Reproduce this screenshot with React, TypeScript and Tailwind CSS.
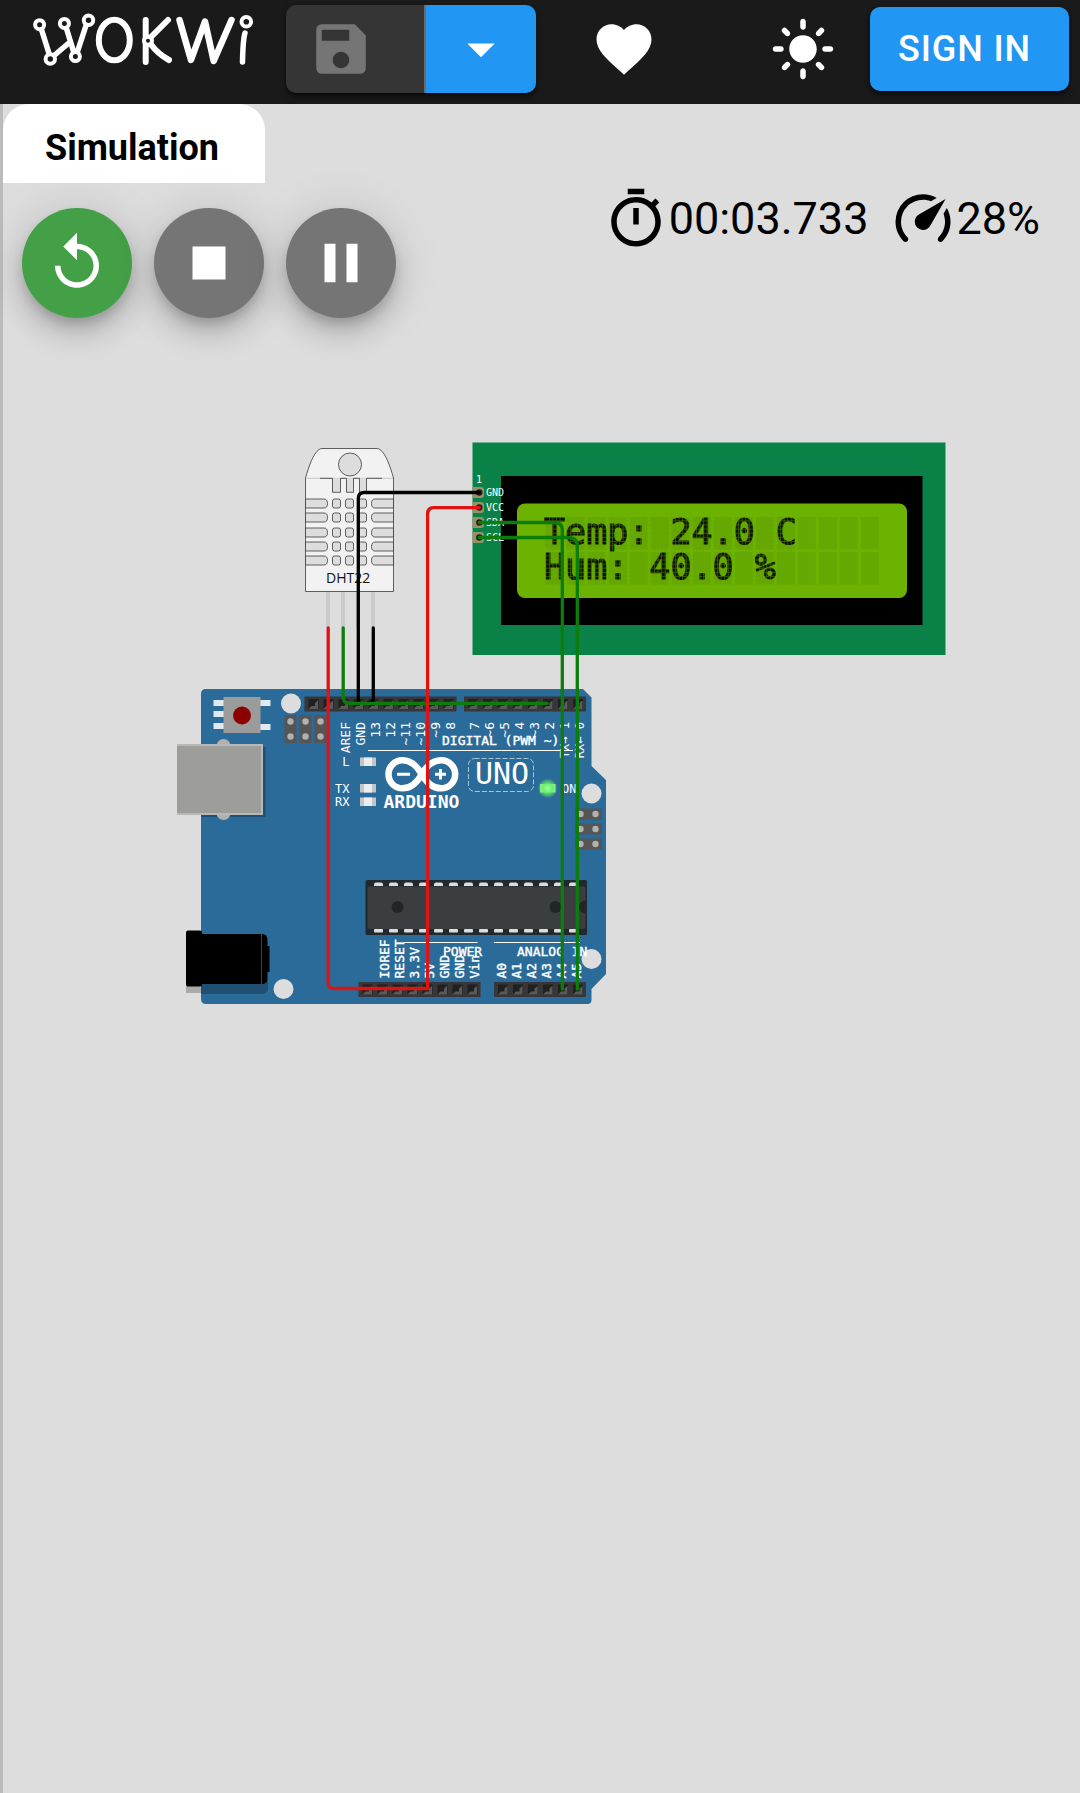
import React from "react";
import {
  MdSave,
  MdArrowDropDown,
  MdFavorite,
  MdLightMode,
  MdOutlineTimer,
  MdReplay,
  MdStop,
  MdPause,
} from "react-icons/md";

const range = (n: number) => Array.from({ length: n }, (_, i) => i);
const MONO = '"DejaVu Sans Mono", monospace';

function Logo() {
  return (
    <svg viewBox="28 10 232 64" className="h-16 w-[232px]" role="img" aria-label="Wokwi" fill="none" stroke="#fff" strokeLinecap="round" strokeLinejoin="round">
      <g strokeWidth="5.5">
        <path d="M41 28L49.500 55M53.500 56L70 42M66 27L74 53M77 53L86.500 24" />
        <ellipse cx="114.300" cy="40" rx="15.500" ry="20.300" strokeWidth="6" />
        <path d="M145.700 20V62M151 37L168 20M151 44.500Q158 54 169 60" strokeWidth="6" />
        <path d="M179.500 20L191 60L205 21.500L213.700 61L231.500 20" strokeWidth="6.500" />
        <path d="M245 33Q243 39 242.500 62" />
      </g>
      <g strokeWidth="4" fill="#1a1a1a">
        <circle cx="39.600" cy="24.700" r="4.500" />
        <circle cx="50.300" cy="59" r="4.700" />
        <circle cx="64.400" cy="23.400" r="4.500" />
        <circle cx="75.400" cy="56.600" r="4.500" />
        <circle cx="88.500" cy="20.300" r="4.700" />
        <circle cx="148" cy="40.700" r="4" />
        <circle cx="246.300" cy="21.700" r="4.800" />
      </g>
    </svg>
  );
}

function GaugeIcon() {
  return (
    <svg viewBox="0 0 24 24" className="size-[66px]" fill="currentColor" aria-hidden="true">
      <path d="M12,16A3,3 0 0,1 9,13C9,11.88 9.61,10.9 10.5,10.39L20.21,4.77L14.68,14.35C14.18,15.33 13.17,16 12,16M12,3C13.81,3 15.5,3.5 16.97,4.32L14.87,5.53C14,5.19 13,5 12,5A8,8 0 0,0 4,13C4,15.21 4.89,17.21 6.34,18.65H6.35C6.74,19.04 6.74,19.67 6.35,20.06C5.96,20.45 5.32,20.45 4.93,20.07V20.07C3.12,18.26 2,15.76 2,13A10,10 0 0,1 12,3M22,13C22,15.76 20.88,18.26 19.07,20.07V20.07C18.68,20.45 18.05,20.45 17.66,20.06C17.27,19.67 17.27,19.04 17.66,18.65V18.65C19.11,17.2 20,15.21 20,13C20,12 19.81,11 19.46,10.1L20.67,8C21.5,9.5 22,11.18 22,13Z" />
    </svg>
  );
}

function Dht22() {
  return (
    <g>
      <g fill="#cacaca">
        {[326, 341, 356, 371].map((x) => (
          <rect key={x} x={x} y="591" width="4" height="37" />
        ))}
      </g>
      <g stroke="#3a3a3a" strokeWidth=".8">
        <path d="M305.500 591.500V478C309 466 313 454 319 449.500Q320 448.500 323 448.500H376Q379 448.500 380 449.500C386 454 390 466 393.500 478V591.500Z" fill="#f2f2f2" />
        <circle cx="350" cy="464.500" r="11.500" fill="#ddd" />
        <path d="M305.500 478.300H393.500" stroke="#999" strokeWidth=".5" />
        <path d="M320 478.300H332.500V492.300H340.500V478.300H346.500V492.300H353.500V478.300H359.500V492.300H366.500V478.300H382" fill="#ddd" />
        {[499, 513, 528, 542, 556].map((y) => (
          <g key={y} fill="#ddd">
            <path d={`M305.500 ${y}H324Q327.500 ${y} 327.500 ${y + 4.500}T324 ${y + 9}H305.500Z`} />
            <path d={`M393.500 ${y}H375Q371.500 ${y} 371.500 ${y + 4.500}T375 ${y + 9}H393.500Z`} />
            {[332.500, 345.500, 358.500].map((x) => (
              <rect key={x} x={x} y={y} width="8" height="9" rx="2" />
            ))}
          </g>
        ))}
      </g>
      <text x="326" y="583" fontSize="14" fontFamily='"Open Sans", sans-serif' fill="#111">DHT22</text>
    </g>
  );
}

function Lcd() {
  return (
    <g>
      <rect x="472.500" y="442.500" width="473" height="212.500" fill="#0a8146" />
      <rect x="501" y="476" width="421.500" height="149" fill="#000" />
      <rect x="517" y="503.500" width="390" height="94.500" rx="8" fill="#6cb201" />
      <g fill="#65a801">
        {[517, 552].map((y) => range(16).map((i) => <rect key={`${y}-${i}`} x={545.700 + i * 21.020} y={y} width="17.800" height="32.500" />))}
      </g>
      <g fontSize="35" fill="#0c1400" stroke="#0c1400" strokeWidth="1">
        <text x="544" y="544">Temp: 24.0 C</text>
        <text x="544" y="579">Hum: 40.0 %</text>
      </g>
      <g fill="#65a801" opacity=".5">
        {range(2).map((row) => range(7).map((i) => <rect key={`${row}-${i}`} x="545" y={520.500 + row * 35 + i * 4.100} width="252" height=".8" />))}
        {range(12).map((c) => range(4).map((i) => <rect key={`${c}-${i}`} x={549 + c * 21.020 + i * 3.560} y="517" width=".8" height="67.500" />))}
      </g>
      {["GND", "VCC", "SDA", "SCL"].map((label, i) => (
        <g key={label}>
          <path d={`M472.500 ${487 + i * 15}H481Q484 ${487 + i * 15} 484 ${490 + i * 15}V${495 + i * 15}Q484 ${498 + i * 15} 481 ${498 + i * 15}H472.500Z`} fill="#959269" />
          <circle cx="479.300" cy={492.500 + i * 15} r="3.200" fill="#2a1a14" />
          <text x="486" y={495.500 + i * 15} fontSize="10" fill="#fff">{label}</text>
        </g>
      ))}
      <text x="476" y="483" fontSize="10" fill="#fff">1</text>
    </g>
  );
}

function Header({ x, y, pins }: { x: number; y: number; pins: number }) {
  return (
    <g>
      <rect x={x} y={y} width={pins * 15 + 2} height="15" fill="#37373a" />
      {range(pins).map((i) => (
        <g key={i}>
          <rect x={x + 4 + i * 15} y={y + 2.500} width="10" height="10" fill="#202020" />
          <path d={`M${x + 13.500 + i * 15} ${y + 4}V${y + 12.500}H${x + 4 + i * 15}L${x + 7 + i * 15} ${y + 9.500}H${x + 10.500 + i * 15}V${y + 6.500}Z`} fill="#5a5a5a" />
        </g>
      ))}
    </g>
  );
}

const topLabels: [number, string][] = [
  [346, "AREF"], [361, "GND"], [376, "13"], [391, "12"], [406, "~11"], [421, "~10"], [436, "~9"], [451, "8"],
  [475, "7"], [490, "~6"], [505, "~5"], [520, "4"], [535, "~3"], [550, "2"], [565, "TX→ 1"], [580, "RX← 0"],
];

const bottomLabels: [number, string][] = [
  [384, "IOREF"], [399, "RESET"], [414, "3.3V"], [429, "5V"], [444, "GND"], [459, "GND"], [474, "Vin"],
  [501, "A0"], [516, "A1"], [531, "A2"], [546, "A3"], [561, "A4"], [576, "A5"],
];

function Arduino() {
  return (
    <g>
      <path d="M206 689H583L591.500 697.500V766L606 780V974L591.500 989V1000Q591.500 1004 587.500 1004H206Q201 1004 201 999V694Q201 689 206 689Z" fill="#2b6b99" />
      <g fill="#ddd">
        <circle cx="291" cy="703.500" r="10" />
        <circle cx="591.500" cy="793.500" r="10" />
        <circle cx="591.500" cy="959" r="10" />
        <circle cx="283.500" cy="989" r="10" />
      </g>

      <g fill="#dfe9ef">
        <rect x="213.500" y="700" width="57" height="6" />
        <rect x="213.500" y="711" width="20" height="6" />
        <rect x="213.500" y="723" width="20" height="6" />
        <rect x="250" y="724" width="20.500" height="6" />
      </g>
      <rect x="223.500" y="697" width="37" height="36" fill="#9b9b9b" />
      <circle cx="242" cy="715.500" r="9" fill="#8c0000" />

      {[290.500, 305.500, 320.500].map((x) => (
        <g key={x}>
          <rect x={x - 6} y="715" width="12" height="28" fill="#555" />
          <circle cx={x} cy="721.500" r="3.200" fill="#b3b1ae" />
          <circle cx={x} cy="736.500" r="3.200" fill="#b3b1ae" />
        </g>
      ))}
      {[814, 829, 844].map((y) => (
        <g key={y}>
          <rect x="575" y={y - 5.500} width="27" height="11" fill="#555" />
          <circle cx="580.500" cy={y} r="3.200" fill="#b3b1ae" />
          <circle cx="595.500" cy={y} r="3.200" fill="#b3b1ae" />
        </g>
      ))}

      <rect x="201" y="747" width="64.500" height="70" fill="#1f5078" />
      <circle cx="223.500" cy="746" r="7" fill="#b1b1ae" />
      <circle cx="223.500" cy="813" r="7" fill="#b1b1ae" />
      <rect x="177" y="744" width="86" height="71" fill="#b7b9b8" />
      <rect x="177" y="746" width="84" height="67" fill="#9d9d99" />

      <rect x="186" y="940" width="15" height="53" fill="#aaa" />
      <path d="M201 980H268V990Q266 994 262 994H201Z" fill="#1f4f73" />
      <rect x="186" y="930.500" width="16" height="56" rx="2" fill="#000" />
      <path d="M201 934H262Q267.500 934 267.500 940V946H269.500V972H267.500V978Q267.500 984 262 984H201Z" fill="#000" />
      <path d="M261.500 934V984" stroke="#444" />

      <Header x={304.500} y={696.500} pins={10} />
      <Header x={464} y={696.500} pins={8} />
      <Header x={358.500} y={982} pins={8} />
      <Header x={494} y={982} pins={6} />

      <g fill="#fff" fontSize="13">
        {topLabels.map(([x, s]) => (
          <text key={s} transform={`translate(${x + 4} 722) rotate(-90)`} textAnchor="end" fontSize={s.length > 4 ? 12 : 13}>{s}</text>
        ))}
        {bottomLabels.map(([x, s]) => (
          <text key={x} transform={`translate(${x + 5} 978.500) rotate(-90)`} stroke="#fff" strokeWidth=".4">{s}</text>
        ))}
        <g stroke="#fff" strokeWidth=".4">
          <text x="442" y="745">DIGITAL (PWM ~)</text>
          <text x="443" y="955.500">POWER</text>
          <text x="517" y="955.500">ANALOG IN</text>
        </g>
        <g fontSize="12">
          <text x="349.500" y="766" textAnchor="end">L</text>
          <text x="349.500" y="793" textAnchor="end">TX</text>
          <text x="349.500" y="806" textAnchor="end">RX</text>
          <text x="562" y="793">ON</text>
        </g>
        <text x="383.500" y="808" fontSize="18" fontWeight="700">ARDUINO</text>
        <text x="475" y="784" fontSize="30">UNO</text>
      </g>
      <path d="M368 750.500H573M404 942.500H477.500M494 942.500H580" stroke="#fff" />
      <rect x="468.500" y="758.500" width="65" height="33" rx="6" fill="none" stroke="#c8dae6" strokeWidth=".8" strokeDasharray="5 2" />
      <path d="M421.800 774.300C417 766 411 760.300 402.500 760.300A14 14 0 0 0 402.500 788.300C411 788.300 417 782.500 421.800 774.300C426.500 766 432.500 760.300 441.200 760.300A14 14 0 0 1 441.200 788.300C432.500 788.300 426.500 782.500 421.800 774.300Z" fill="none" stroke="#fff" strokeWidth="6.500" />
      <path d="M397 774.300H410M435 774.300H446M440.500 769V779.500" stroke="#fff" strokeWidth="3" />

      {[757.500, 784, 797.500].map((y) => (
        <g key={y}>
          <rect x="360" y={y} width="16" height="8.500" fill="#c2c6c8" />
          <rect x="364" y={y} width="8" height="8.500" fill="#ededed" />
        </g>
      ))}
      <rect x="540" y="784" width="15.500" height="8.500" fill="#a5e8a5" />
      <circle cx="547.700" cy="788.300" r="10" fill="url(#glow)" />

      <rect x="365.500" y="880" width="221.500" height="55" rx="1.500" fill="#22292e" />
      <rect x="367.500" y="886.500" width="218" height="42.500" rx="2" fill="#3b3e40" />
      <g fill="#ddd">
        {range(14).map((i) => (
          <g key={i}>
            <path d={`M${374 + i * 15} 886V884.500Q${374 + i * 15} 882.500 ${376 + i * 15} 882.500H${381 + i * 15}Q${383 + i * 15} 882.500 ${383 + i * 15} 884.500V886Z`} />
            <rect x={374 + i * 15} y="929" width="9" height="3.500" rx="1" />
          </g>
        ))}
      </g>
      <g fill="#222527">
        <circle cx="397.500" cy="907" r="6" />
        <circle cx="555.500" cy="907" r="6" />
        <path d="M585.500 900.500A6.500 6.500 0 0 0 585.500 913.500Z" />
      </g>
    </g>
  );
}

function Wires() {
  return (
    <g fill="none" strokeWidth="3.300" strokeLinecap="round">
      <path d="M479.300 492.500H364.300Q358.300 492.500 358.300 498.500V703" stroke="#000" />
      <path d="M373.300 628V698Q373.300 703 368 703" stroke="#000" />
      <path d="M343.200 628V697Q343.200 703.300 349.500 703.300H547" stroke="#0b7d0b" />
      <path d="M479.300 522.500H554Q562.300 522.500 562.300 530V989" stroke="#0b7d0b" />
      <path d="M479.300 537.500H568Q577.300 537.500 577.300 546V989" stroke="#0b7d0b" />
      <path d="M479.300 507.600H434Q427.600 507.600 427.600 514V988.500" stroke="#e01212" />
      <path d="M328.200 628V983Q328.200 988.500 334 988.500H427.600" stroke="#e01212" />
    </g>
  );
}

function Circuit() {
  return (
    <svg viewBox="176 440 774 568" className="w-[774px] max-w-full" role="img" aria-label="Circuit diagram" fontFamily={MONO}>
      <defs>
        <radialGradient id="glow">
          <stop offset="0" stopColor="#9cff9c" />
          <stop offset=".5" stopColor="#62f062" stopOpacity=".85" />
          <stop offset="1" stopColor="#62f062" stopOpacity="0" />
        </radialGradient>
      </defs>
      <Arduino />
      <Lcd />
      <Dht22 />
      <Wires />
    </svg>
  );
}

const roundButton =
  "flex size-[110px] items-center justify-center rounded-full text-white shadow-[0_8px_14px_-3px_rgba(0,0,0,0.2),0_16px_28px_rgba(0,0,0,0.14),0_3px_50px_rgba(0,0,0,0.12)]";

export default function App() {
  return (
    <div className="flex min-h-screen flex-col bg-[#ddd] font-[Roboto,sans-serif] text-black">
      <header className="flex h-[104px] items-start bg-[#1a1a1a] pl-7">
        <a href="#" className="mt-2.5">
          <Logo />
        </a>
        <div className="mt-[5px] ml-[26px] flex h-[88px] overflow-hidden rounded-[10px] shadow-md shadow-black/60">
          <button aria-label="Save" disabled className="flex w-[140px] items-center border-r-2 border-[#6b6b6b] bg-[#353535] pl-[22px] text-[#757575]">
            <MdSave className="size-[66px]" />
          </button>
          <button aria-label="Save options" className="flex w-[110px] items-center justify-center bg-[#2196f3] text-white">
            <MdArrowDropDown className="size-[66px]" />
          </button>
        </div>
        <button aria-label="Favorite" className="mt-4 ml-[55px] text-white">
          <MdFavorite className="size-[66px]" />
        </button>
        <button aria-label="Toggle theme" className="mt-4 ml-auto text-white">
          <MdLightMode className="size-[66px]" />
        </button>
        <button className="mt-[7px] mr-[11px] ml-[34px] flex h-[84px] w-[199px] items-center rounded-[10px] bg-[#2196f3] pl-7 text-4xl font-medium tracking-wide text-white shadow-md shadow-black/60">
          SIGN IN
        </button>
      </header>

      <main className="flex flex-1 flex-col border-l-3 border-[#bbb]">
        <div role="tablist" className="flex">
          <button role="tab" aria-selected="true" className="h-[79px] w-[262px] rounded-t-[26px] bg-white pt-2 pr-1 text-4xl font-bold">
            Simulation
          </button>
        </div>
        <div className="flex items-start justify-between pt-[3px] pr-10 pl-[19px]">
          <div className="flex gap-[22px] pt-[22px]">
            <button aria-label="Restart" className={`${roundButton} bg-[#43a047]`}>
              <MdReplay className="size-[66px]" />
            </button>
            <button aria-label="Stop" className={`${roundButton} bg-[#757575]`}>
              <MdStop className="size-[66px]" />
            </button>
            <button aria-label="Pause" className={`${roundButton} bg-[#757575]`}>
              <MdPause className="size-[66px]" />
            </button>
          </div>
          <div className="flex items-center text-[45px] leading-[56px]">
            <MdOutlineTimer className="size-[66px]" />
            <span>00:03.733</span>
            <span className="ml-[22px] flex items-center">
              <GaugeIcon />
              <span>28%</span>
            </span>
          </div>
        </div>
        <div className="mt-[122px] pl-[173px]">
          <Circuit />
        </div>
      </main>
    </div>
  );
}
